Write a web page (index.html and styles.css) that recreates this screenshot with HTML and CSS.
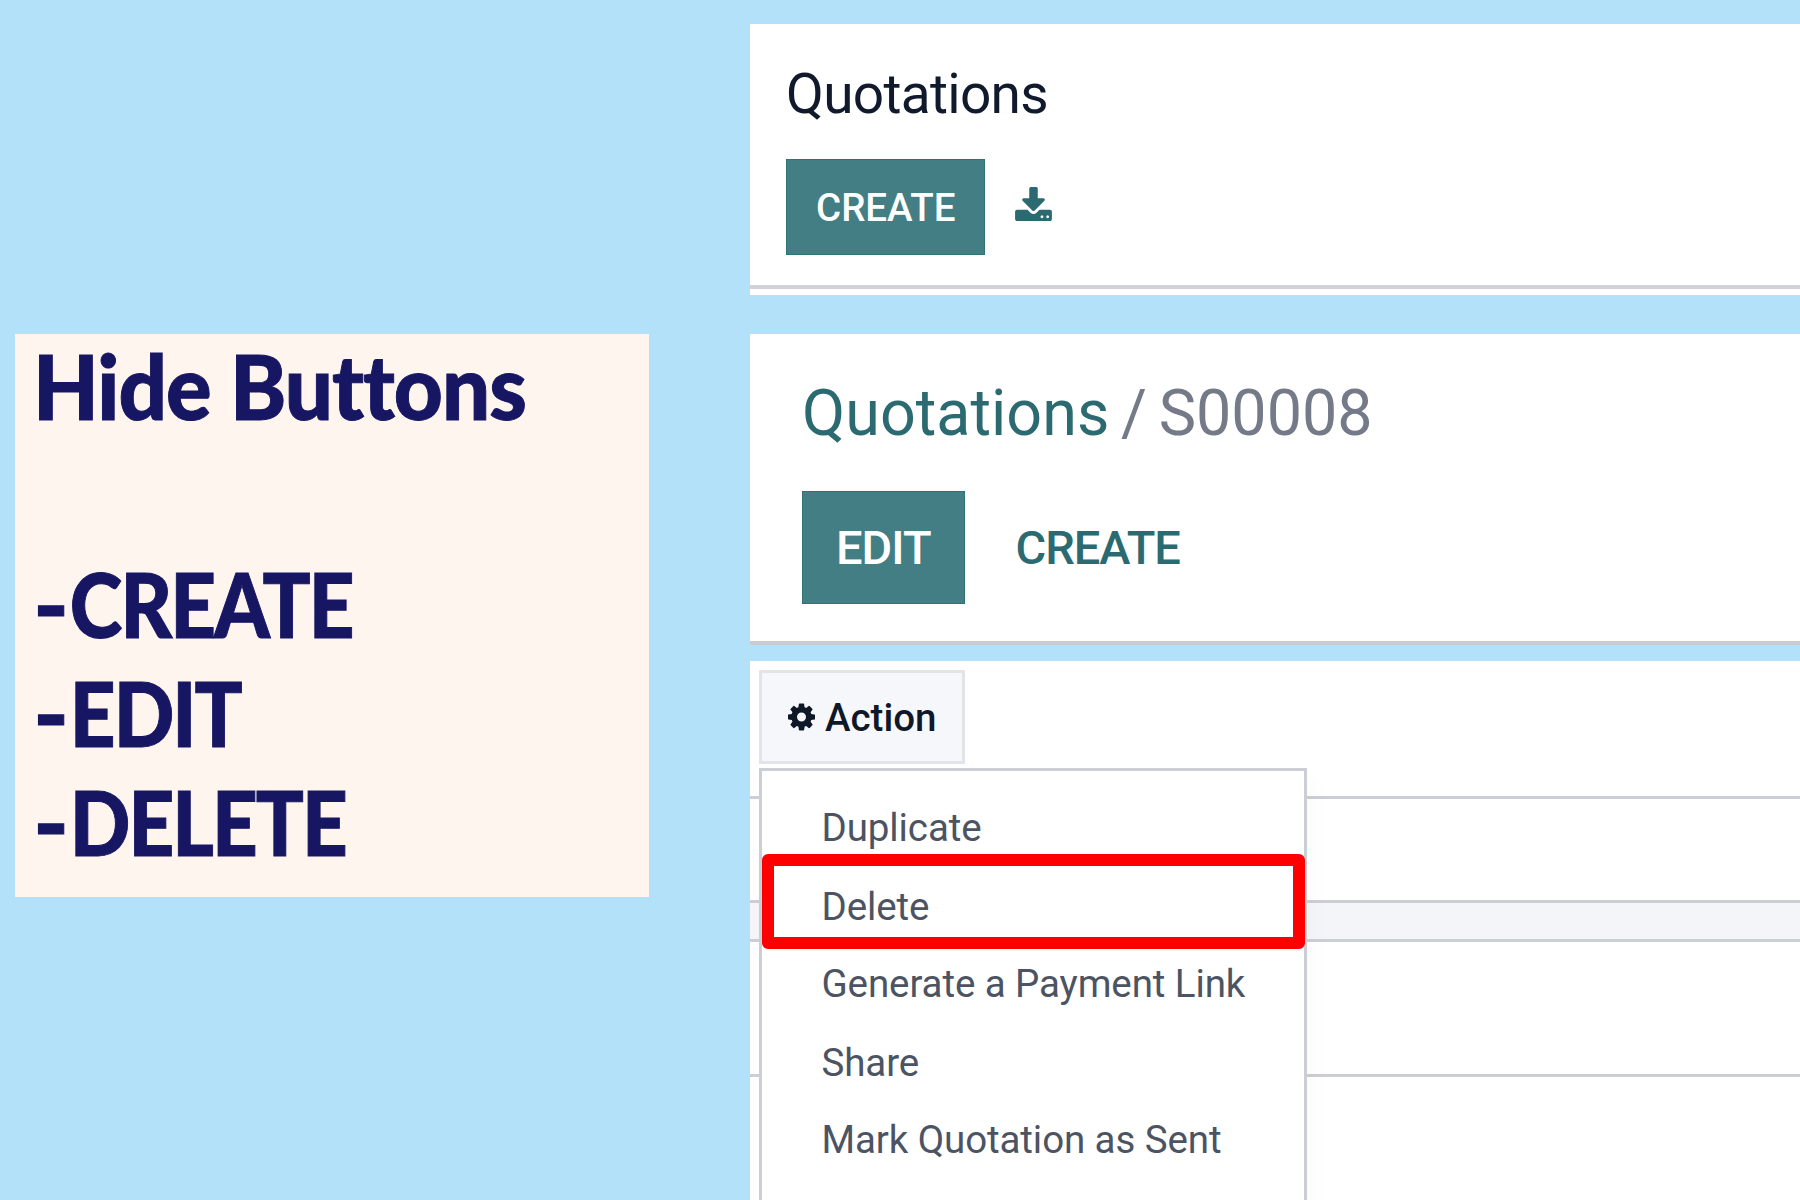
FILE: index.html
```html
<!DOCTYPE html>
<html lang="en">
<head>
<meta charset="utf-8">
<title>Hide Buttons</title>
<link rel="stylesheet" href="styles.css">
</head>
<body>
<main class="page">
  <section class="note">
    <h1 class="note-title">Hide Buttons</h1>
    <ul class="note-list">
      <li><span class="dash">-</span>CREATE</li>
      <li><span class="dash">-</span>EDIT</li>
      <li><span class="dash">-</span>DELETE</li>
    </ul>
  </section>

  <div class="shots">
    <section class="shot shot-list">
      <h2 class="list-title">Quotations</h2>
      <div class="list-buttons">
        <button class="btn btn-primary">CREATE</button>
        <svg class="icon-download" viewBox="64 0 1664 1536" aria-hidden="true"><path d="M1344 1344q0-26-19-45t-45-19-45 19-19 45 19 45 45 19 45-19 19-45zm256 0q0-26-19-45t-45-19-45 19-19 45 19 45 45 19 45-19 19-45zm128-224v320q0 40-28 68t-68 28h-1472q-40 0-68-28t-28-68v-320q0-40 28-68t68-28h465l135 136q58 56 136 56t136-56l136-136h464q40 0 68 28t28 68zm-325-569q17 41-14 70l-448 448q-18 19-45 19t-45-19l-448-448q-31-29-14-70 17-39 59-39h256v-448q0-26 19-45t45-19h256q26 0 45 19t19 45v448h256q42 0 59 39z"/></svg>
      </div>
    </section>

    <section class="shot shot-form">
      <h2 class="breadcrumb"><a>Quotations</a> <span>/ S00008</span></h2>
      <div class="form-buttons">
        <button class="btn btn-primary btn-large">EDIT</button>
        <button class="btn btn-link btn-large">CREATE</button>
      </div>
    </section>

    <section class="shot shot-action">
      <div class="toolbar">
        <button class="action-btn">
          <svg class="icon-cog" viewBox="128 128 1536 1536" aria-hidden="true"><path d="M1152 896q0-106-75-181t-181-75-181 75-75 181 75 181 181 75 181-75 75-181zm512-109v222q0 12-8 23t-20 13l-185 28q-19 54-39 91 35 50 107 138 10 12 10 25t-9 23q-27 37-99 108t-94 71q-12 0-26-9l-138-108q-44 23-91 38-16 136-29 186-7 28-36 28h-222q-14 0-24.5-8.5t-11.5-21.5l-28-184q-49-16-90-37l-141 107q-10 9-25 9-14 0-25-11-126-114-165-168-7-10-7-23 0-12 8-23 15-21 51-66.5t54-70.5q-27-50-41-99l-183-27q-13-2-21-12.5t-8-23.5v-222q0-12 8-23t19-13l186-28q14-46 39-92-40-57-107-138-10-12-10-24 0-10 9-23 26-36 98.5-107.5t94.5-71.5q13 0 26 10l138 107q44-23 91-38 16-136 29-186 7-28 36-28h222q14 0 24.5 8.5t11.5 21.5l28 184q49 16 90 37l142-107q9-9 24-9 13 0 25 10 129 119 165 170 7 8 7 22 0 12-8 23-15 21-51 66.5t-54 70.5q26 50 41 98l183 28q13 2 21 12.5t8 23.5z"/></svg>
          <span>Action</span>
        </button>
      </div>
      <div class="row row-status"></div>
      <div class="row row-band"></div>
      <div class="row row-sheet"></div>
      <div class="row row-rest"></div>
      <ul class="menu">
        <li>Duplicate</li>
        <li class="low">Delete</li>
        <li>Generate a Payment Link</li>
        <li class="low">Share</li>
        <li>Mark Quotation as Sent</li>
      </ul>
      <div class="highlight"></div>
    </section>
  </div>
</main>
</body>
</html>
```

FILE: styles.css
```css
* {
  box-sizing: border-box;
}

body {
  margin: 0;
  background: #b3e1fa;
  font-family: Roboto, "Liberation Sans", sans-serif;
}

h1, h2, ul {
  margin: 0;
  padding: 0;
  font-weight: 400;
  list-style: none;
}

.page {
  display: grid;
  grid-template-columns: 634px 1fr;
  column-gap: 101px;
  align-items: start;
  height: 1200px;
  padding-left: 15px;
  overflow: hidden;
}

/* Left note */
.note {
  height: 563px;
  margin-top: 334px;
  background: #fff5ef;
  color: #161663;
  font-family: Lato, "Noto Sans", sans-serif;
  font-size: 90px;
  line-height: 109px;
  font-variant-ligatures: none;
  -webkit-text-stroke: 1px #161663;
}

.note-title {
  margin-top: -3px;
  padding-left: 18px;
  font-size: inherit;
  font-weight: 900;
  letter-spacing: -1px;
  white-space: nowrap;
  transform: scaleX(0.945);
  transform-origin: 18px 0;
}

.note-list {
  margin-top: 109px;
  padding-left: 19px;
  font-weight: 900;
  letter-spacing: -2.2px;
  transform: scaleX(0.886);
  transform-origin: 19px 0;
}

.dash {
  display: inline-block;
  margin-right: 9px;
  transform: scaleX(1.2);
  transform-origin: 4px 0;
}

/* Right column */
.shots {
  display: flex;
  flex-direction: column;
  height: 1200px;
  padding-top: 24px;
}

.shot {
  flex: none;
  background: #fff;
}

.btn {
  height: 96px;
  padding: 0 30px;
  border: 0;
  font: 500 38.5px Roboto, sans-serif;
}

.btn-primary {
  border: 1px solid #2d7378;
  padding: 0 28.5px 0 29px;
  background: #427e84;
  color: #fff;
}

.btn-link {
  background: none;
  color: #2b6a70;
}

.btn-large {
  height: 113px;
  padding: 0 33px;
  font-size: 47px;
  letter-spacing: -1px;
}

.shot-list {
  height: 271px;
  padding-top: 38px;
}

.list-title {
  padding-left: 36px;
  color: #111a2c;
  font-size: 55px;
  line-height: 64px;
  letter-spacing: -0.7px;
}

.list-buttons {
  display: flex;
  align-items: flex-start;
  gap: 30px;
  height: 163px;
  padding: 33px 0 0 36px;
  border-bottom: 4px solid #cfd2d8;
}

.icon-download {
  width: 37px;
  height: 34px;
  margin-top: 28px;
  fill: #2b6a70;
}

.shot-form {
  height: 311px;
  margin-top: 39px;
  padding-top: 41px;
  border-bottom: 4px solid #cacbd0;
}

.breadcrumb {
  padding-left: 52px;
  color: #747a88;
  font-size: 65px;
  line-height: 76px;
  word-spacing: -4px;
  white-space: nowrap;
  transform: scaleX(0.967);
  transform-origin: 52px 0;
}

.breadcrumb a {
  color: #2b6a70;
}

.form-buttons {
  display: flex;
  gap: 18px;
  margin-top: 40px;
  padding-left: 52px;
}

/* Action menu */
.shot-action {
  position: relative;
  height: 539px;
  margin-top: 16px;
}

.toolbar {
  height: 135px;
  padding: 9px 0 0 9px;
}

.action-btn {
  display: flex;
  align-items: center;
  gap: 10px;
  width: 206px;
  height: 94px;
  padding: 0 0 0 26px;
  border: 3px solid #e1e4e9;
  background: #f6f7fb;
  color: #0f1828;
  font: 500 38.5px Roboto, sans-serif;
}

.icon-cog {
  width: 27px;
  height: 28px;
  fill: #0f1828;
}

.row {
  border-top: 3px solid #cbced5;
}

.row-status {
  height: 104px;
}

.row-band {
  height: 39px;
  background: #f3f5f9;
}

.row-sheet {
  height: 135px;
}

.row-rest {
  height: 126px;
}

.menu {
  position: absolute;
  top: 107px;
  left: 9px;
  width: 548px;
  height: 440px;
  padding-top: 18px;
  border: 3px solid #cbced5;
  background: #fff;
  box-shadow: 8px 12px 20px rgba(0, 0, 0, 0.02);
  color: #4c5362;
  font-size: 38.5px;
  line-height: 78px;
  letter-spacing: -0.1px;
}

.menu li {
  height: 78px;
  padding-left: 59.5px;
}

.menu .low {
  padding-top: 1px;
}

.highlight {
  position: absolute;
  top: 193px;
  left: 12px;
  width: 543px;
  height: 95px;
  border: 12px solid #f00;
  border-radius: 6px;
}
```
